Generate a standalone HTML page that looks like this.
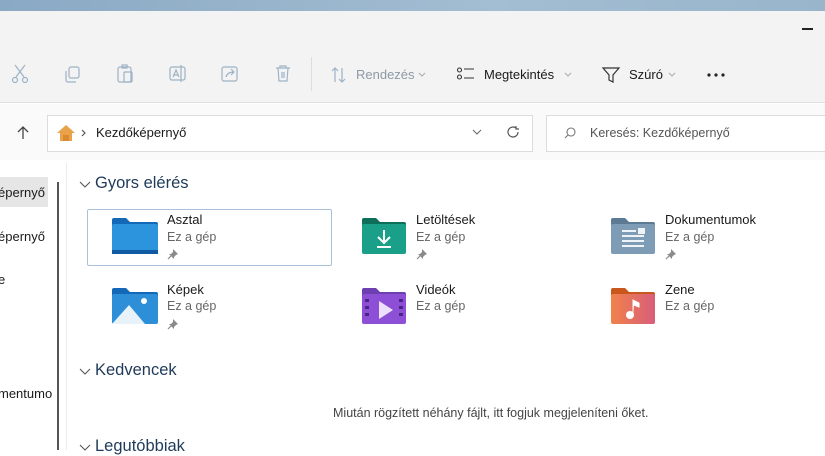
<!DOCTYPE html>
<html><head><meta charset="utf-8"><style>
*{margin:0;padding:0;box-sizing:border-box}
body{width:825px;height:450px;overflow:hidden;background:#fff;font-family:"Segoe UI","Liberation Sans",sans-serif;color:#1a1a1a;position:relative}
.a{position:absolute}
.t{font-size:13px}
.g{color:#666;font-size:12.5px}
svg{position:absolute}
.h{font-size:16.5px;color:#1f3a5a}
</style></head><body>
<div class="a" style="left:0;top:0;width:825px;height:11px;background:linear-gradient(90deg,#8aa9c4,#a3bdd2 60%,#98b5cb)"></div>
<div class="a" style="left:0;top:11px;width:825px;height:92px;background:#f3f3f3;border-bottom:1px solid #e0e0e0"></div>
<div class="a" style="left:802px;top:28px;width:11px;height:1.5px;background:#222"></div>
<svg style="left:10px;top:63px" width="20" height="22" fill="none" stroke="#9db3c6" stroke-width="1.2"><path d="M5 2l9 12M15 2L6 14"/><circle cx="5" cy="17" r="2.5"/><circle cx="15" cy="17" r="2.5"/></svg>
<svg style="left:63px;top:65px" width="20" height="20" fill="none" stroke="#9db3c6" stroke-width="1.2"><rect x="6" y="2" width="10" height="11" rx="2"/><path d="M3 6v9a2 2 0 0 0 2 2h8"/></svg>
<svg style="left:116px;top:63px" width="20" height="22" fill="none" stroke="#9db3c6" stroke-width="1.2"><rect x="2" y="4" width="13" height="15" rx="2"/><rect x="6" y="2" width="5" height="3"/><rect x="8" y="9" width="8" height="10" rx="1"/></svg>
<svg style="left:168px;top:64px" width="20" height="20" fill="none" stroke="#9db3c6" stroke-width="1.2"><rect x="2" y="3" width="15" height="13" rx="2"/><path d="M5 13l3-7 3 7M6 11h4M13 1v17"/></svg>
<svg style="left:220px;top:64px" width="20" height="20" fill="none" stroke="#9db3c6" stroke-width="1.2"><rect x="2" y="3" width="15" height="14" rx="2"/><path d="M6 13c1-4 4-5 8-5M11 5l3 3-3 3"/></svg>
<svg style="left:274px;top:64px" width="18" height="20" fill="none" stroke="#9db3c6" stroke-width="1.2"><path d="M2 4h14M6 4V2h6v2M4 4l1 13h8l1-13M8 8v6M10 8v6"/></svg>
<div class="a" style="left:311px;top:57px;width:1px;height:34px;background:#ddd"></div>
<svg style="left:330px;top:66px" width="18" height="18" fill="none" stroke="#9db3c6" stroke-width="1.2"><path d="M5 16V2M2 5l3-3 3 3M12 2v14M9 13l3 3 3-3"/></svg>
<div class="a t" style="left:356px;top:67px;color:#8d9aa5">Rendezés</div>
<svg style="left:418px;top:72px" width="8" height="6" fill="none" stroke="#aaa"><path d="M1 1l3 3 3-3"/></svg>
<svg style="left:456px;top:66px" width="20" height="16" fill="none" stroke="#333" stroke-width="1.1"><rect x="1.5" y="2" width="4" height="4" rx="2"/><rect x="1.5" y="9" width="4" height="4" rx="2"/><path d="M8 3h10M8 12h10"/></svg>
<div class="a t" style="left:484px;top:67px">Megtekintés</div>
<svg style="left:564px;top:72px" width="8" height="6" fill="none" stroke="#aaa"><path d="M1 1l3 3 3-3"/></svg>
<svg style="left:601px;top:65px" width="20" height="20" fill="none" stroke="#333" stroke-width="1.2"><path d="M2 3h16l-6 7v7l-4-2v-5z"/></svg>
<div class="a t" style="left:629px;top:67px">Szúró</div>
<svg style="left:668px;top:72px" width="8" height="6" fill="none" stroke="#aaa"><path d="M1 1l3 3 3-3"/></svg>
<svg style="left:706px;top:72px" width="20" height="6" fill="#222"><circle cx="3" cy="3" r="1.6"/><circle cx="10" cy="3" r="1.6"/><circle cx="17" cy="3" r="1.6"/></svg>
<div class="a" style="left:0;top:104px;width:825px;height:56px;background:#fafafa"></div>
<svg style="left:15px;top:125px" width="16" height="16" fill="none" stroke="#444" stroke-width="1.3"><path d="M8 14V2M3 7l5-5 5 5"/></svg>
<div class="a" style="left:47px;top:115px;width:486px;height:37px;background:#fff;border:1px solid #dcdcdc"></div>
<svg style="left:56px;top:124px" width="20" height="18"><path d="M10 1L1 9h3v8h12V9h3z" fill="#e9a24a"/><rect x="7" y="11" width="6" height="6" fill="#d98a2e"/></svg>
<svg style="left:81px;top:129px" width="6" height="8" fill="none" stroke="#555" stroke-width="1.2"><path d="M1 1l3 3-3 3"/></svg>
<div class="a t" style="left:96px;top:125px">Kezdőképernyő</div>
<svg style="left:472px;top:129px" width="10" height="6" fill="none" stroke="#666"><path d="M1 1l4 4 4-4"/></svg>
<svg style="left:506px;top:125px" width="14" height="14" fill="none" stroke="#555" stroke-width="1.2"><path d="M12 7a5 5 0 1 1-2-4M10 1v3h3"/></svg>
<div class="a" style="left:546px;top:115px;width:280px;height:37px;background:#fff;border:1px solid #dcdcdc"></div>
<svg style="left:563px;top:126px" width="14" height="14" fill="none" stroke="#777" stroke-width="1.1"><circle cx="8" cy="6" r="4"/><path d="M5 9l-3 3"/></svg>
<div class="a" style="left:590px;top:126px;font-size:12.5px;color:#555">Keresés: Kezdőképernyő</div>
<div class="a" style="left:0;top:177px;width:48px;height:30px;background:#e6e6e6"></div>
<div class="a t" style="left:-2px;top:185px">épernyő</div>
<div class="a t" style="left:-2px;top:229px">épernyő</div>
<div class="a t" style="left:-2px;top:272px">e</div>
<div class="a t" style="left:-2px;top:386px">mentumo</div>
<div class="a" style="left:57px;top:182px;width:2px;height:268px;background:#555"></div>
<div class="a" style="left:66px;top:163px;width:1px;height:287px;background:#ececec"></div>
<svg style="left:79px;top:181px" width="12" height="8" fill="none" stroke="#555" stroke-width="1.1"><path d="M1 1l5 5 5-5"/></svg>
<div class="a h" style="left:95px;top:174px">Gyors elérés</div>
<div class="a" style="left:87px;top:209px;width:245px;height:57px;border:1px solid #a9c2d9;border-radius:2px"></div>
<svg style="left:111px;top:217px" width="48" height="38"><path d="M1 3a2 2 0 0 1 2-2h12l4 4h26a2 2 0 0 1 2 2v28a2 2 0 0 1-2 2H3a2 2 0 0 1-2-2z" fill="#1468b8"/><rect x="1" y="7" width="46" height="30" rx="2" fill="#2c94dc"/><rect x="1" y="33" width="46" height="4" fill="#0f5aa0"/></svg>
<div class="a t" style="left:167px;top:212px">Asztal</div><div class="a g" style="left:167px;top:230px">Ez a gép</div>
<svg style="left:361px;top:217px" width="46" height="38"><path d="M1 3a2 2 0 0 1 2-2h12l4 4h24a2 2 0 0 1 2 2v28H1z" fill="#0d6f5a"/><rect x="1" y="7" width="44" height="30" rx="2" fill="#1aa088"/><path d="M23 13v13M17 20l6 6 6-6M16 30h14" stroke="#fff" stroke-width="2" fill="none"/></svg>
<div class="a t" style="left:416px;top:212px">Letöltések</div><div class="a g" style="left:416px;top:230px">Ez a gép</div>
<svg style="left:610px;top:217px" width="46" height="38"><path d="M1 3a2 2 0 0 1 2-2h12l4 4h24a2 2 0 0 1 2 2v28H1z" fill="#5d7a94"/><rect x="1" y="7" width="44" height="30" rx="2" fill="#7f9cb6"/><path d="M12 14h14M12 19h22M12 24h22M12 29h22" stroke="#eef3f7" stroke-width="2"/><rect x="28" y="11" width="7" height="6" fill="#eef3f7"/></svg>
<div class="a t" style="left:665px;top:212px">Dokumentumok</div><div class="a g" style="left:665px;top:230px">Ez a gép</div>
<svg style="left:111px;top:287px" width="48" height="38"><path d="M1 3a2 2 0 0 1 2-2h12l4 4h26a2 2 0 0 1 2 2v28H1z" fill="#1468b8"/><rect x="1" y="7" width="46" height="30" rx="2" fill="#2c8fd8"/><path d="M1 37L18 18 34 37z" fill="#e8f2fa"/><circle cx="33" cy="14" r="3" fill="#fff"/></svg>
<div class="a t" style="left:167px;top:282px">Képek</div><div class="a g" style="left:167px;top:299px">Ez a gép</div>
<svg style="left:361px;top:287px" width="46" height="38"><path d="M1 3a2 2 0 0 1 2-2h12l4 4h24a2 2 0 0 1 2 2v28H1z" fill="#6d3fb0"/><rect x="1" y="7" width="44" height="30" rx="2" fill="#8c4fd6"/><path d="M18 14v18l14-9z" fill="#ece0fb"/><g fill="#4a2585"><rect x="4" y="12" width="4" height="3"/><rect x="4" y="19" width="4" height="3"/><rect x="4" y="26" width="4" height="3"/><rect x="38" y="12" width="4" height="3"/><rect x="38" y="19" width="4" height="3"/><rect x="38" y="26" width="4" height="3"/></g></svg>
<div class="a t" style="left:416px;top:282px">Videók</div><div class="a g" style="left:416px;top:299px">Ez a gép</div>
<svg style="left:610px;top:287px" width="46" height="38"><defs><linearGradient id="z" x1="0" x2="1"><stop offset="0" stop-color="#f0824a"/><stop offset="1" stop-color="#d85e7a"/></linearGradient></defs><path d="M1 3a2 2 0 0 1 2-2h12l4 4h24a2 2 0 0 1 2 2v28H1z" fill="#c9571c"/><rect x="1" y="7" width="44" height="30" rx="2" fill="url(#z)"/><circle cx="20" cy="28" r="4" fill="#fff"/><path d="M23 28V13l6 3v4l-5-2" fill="#fff" stroke="#fff" stroke-width="1"/></svg>
<div class="a t" style="left:665px;top:282px">Zene</div><div class="a g" style="left:665px;top:299px">Ez a gép</div>
<!-- pins -->
<svg style="left:167px;top:248px" width="12" height="12" fill="#8a8a8a"><path d="M6 1l5 5-2 1-2 2 0 2-5-5 2 0 2-2z"/><path d="M4 8L1 11" stroke="#8a8a8a" stroke-width="1.2"/></svg>
<svg style="left:416px;top:248px" width="12" height="12" fill="#8a8a8a"><path d="M6 1l5 5-2 1-2 2 0 2-5-5 2 0 2-2z"/><path d="M4 8L1 11" stroke="#8a8a8a" stroke-width="1.2"/></svg>
<svg style="left:665px;top:248px" width="12" height="12" fill="#8a8a8a"><path d="M6 1l5 5-2 1-2 2 0 2-5-5 2 0 2-2z"/><path d="M4 8L1 11" stroke="#8a8a8a" stroke-width="1.2"/></svg>
<svg style="left:167px;top:318px" width="12" height="12" fill="#8a8a8a"><path d="M6 1l5 5-2 1-2 2 0 2-5-5 2 0 2-2z"/><path d="M4 8L1 11" stroke="#8a8a8a" stroke-width="1.2"/></svg>
<svg style="left:79px;top:368px" width="12" height="8" fill="none" stroke="#555" stroke-width="1.1"><path d="M1 1l5 5 5-5"/></svg>
<div class="a h" style="left:95px;top:361px">Kedvencek</div>
<div class="a" style="left:333px;top:406px;font-size:12.5px;color:#444">Miután rögzített néhány fájlt, itt fogjuk megjeleníteni őket.</div>
<svg style="left:79px;top:444px" width="12" height="8" fill="none" stroke="#555" stroke-width="1.1"><path d="M1 1l5 5 5-5"/></svg>
<div class="a h" style="left:95px;top:437px">Legutóbbiak</div>
</body></html>
